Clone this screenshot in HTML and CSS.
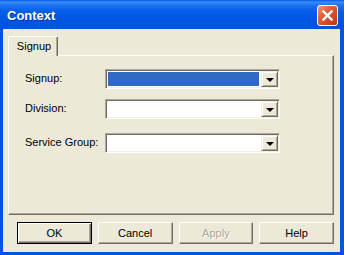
FILE: index.html
```html
<!DOCTYPE html>
<html lang="en">
  <head>
    <meta charset="UTF-8" />
    <title>Context</title>
    <link rel="stylesheet" href="styles.css">
  </head>
  <body>
    <div class="window">
      <div class="titlebar">
        <span class="title">Context</span>
        <button class="close" type="button">
          <svg width="19" height="19" viewBox="0 0 19 19">
            <path d="M5.5 5.5 L13.5 13.5 M13.5 5.5 L5.5 13.5" stroke="#fff" stroke-width="2.4" stroke-linecap="square" fill="none" />
          </svg>
        </button>
      </div>

      <div class="client">
        <div class="tabs">
          <div class="tab">Signup</div>
        </div>

        <div class="panel">
          <div class="row">
            <label class="label">Signup:</label>
            <div class="combo">
              <div class="field selected"></div>
              <span class="drop"><i class="arrow"></i></span>
            </div>
          </div>
          <div class="row">
            <label class="label">Division:</label>
            <div class="combo">
              <div class="field"></div>
              <span class="drop"><i class="arrow"></i></span>
            </div>
          </div>
          <div class="row row-spaced">
            <label class="label">Service Group:</label>
            <div class="combo">
              <div class="field"></div>
              <span class="drop"><i class="arrow"></i></span>
            </div>
          </div>
        </div>

        <div class="buttons">
          <button class="btn default" type="button">OK</button>
          <button class="btn" type="button">Cancel</button>
          <button class="btn disabled" type="button">Apply</button>
          <button class="btn" type="button">Help</button>
        </div>
      </div>
    </div>
  </body>
</html>
```

FILE: styles.css
```css
* {
  box-sizing: border-box;
  margin: 0;
  padding: 0;
}

body {
  width: 344px;
  height: 255px;
  overflow: hidden;
  font-family: "Liberation Sans", Arial, sans-serif;
  font-size: 11px;
  color: #000;
}

.window {
  width: 344px;
  height: 255px;
  display: flex;
  flex-direction: column;
}

/* Title bar */
.titlebar {
  height: 29px;
  display: flex;
  align-items: center;
  justify-content: space-between;
  padding: 2px 6px 0 7px;
  background: linear-gradient(to bottom, #0058e6 0%, #3d8cf5 7%, #1c72ef 18%, #065de8 40%, #0055e5 75%, #0050dc 100%);
}

.title {
  color: #fff;
  font-size: 13px;
  font-weight: bold;
  text-shadow: 1px 1px #0a2f9c;
}

.close {
  width: 21px;
  height: 21px;
  border: 1px solid #fff;
  border-radius: 3px;
  background: linear-gradient(135deg, #f1977a 0%, #e0633f 35%, #cf4724 70%, #bd3412 100%);
  display: flex;
  align-items: center;
  justify-content: center;
}

/* Client area */
.client {
  flex: 1;
  display: flex;
  flex-direction: column;
  background-color: #ece9d8;
  border-left: 3px solid #0055e5;
  border-right: 4px solid #0055e5;
  border-bottom: 3px solid #0052df;
  padding: 7px 6px 8px 5px;
}

.tabs {
  display: flex;
  height: 19px;
}

.tab {
  width: 50px;
  height: 20px;
  margin-bottom: -1px;
  position: relative;
  z-index: 1;
  background-color: #ece9d8;
  border-top: 1px solid #fff;
  border-left: 1px solid #fff;
  border-right: 1px solid #716f64;
  border-radius: 2px 2px 0 0;
  box-shadow: inset -1px 0 #aca899;
  text-align: center;
  line-height: 18px;
  padding-left: 2px;
}

.panel {
  height: 160px;
  border-top: 1px solid #fff;
  border-left: 1px solid #fff;
  border-right: 1px solid #716f64;
  border-bottom: 1px solid #716f64;
  box-shadow: inset -1px -1px #aca899;
  padding: 13px 0 0 16px;
  display: flex;
  flex-direction: column;
  gap: 10px;
}

.row {
  display: flex;
  align-items: center;
  height: 20px;
}

.row-spaced {
  margin-top: 4px;
}

.label {
  width: 80px;
  padding-bottom: 3px;
}

.combo {
  width: 175px;
  height: 20px;
  display: flex;
  background-color: #fff;
  border: 1px solid;
  border-color: #aca899 #fff #fff #aca899;
  box-shadow: inset 1px 1px #716f64, inset -1px -1px #f1efe2;
  padding: 1px 1px 1px 1px;
}

.field {
  flex: 1;
  margin: 1px 2px 1px 1px;
}

.field.selected {
  background-color: #316ac5;
}

.drop {
  width: 17px;
  height: 16px;
  display: flex;
  align-items: center;
  justify-content: center;
  background-color: #ece9d8;
  border: 1px solid;
  border-color: #f1efe2 #716f64 #716f64 #f1efe2;
  box-shadow: inset 1px 1px #fff, inset -1px -1px #aca899;
}

.arrow {
  width: 0;
  height: 0;
  border-left: 4px solid transparent;
  border-right: 4px solid transparent;
  border-top: 4px solid #000;
  margin-top: 1px;
}

/* Dialog buttons */
.buttons {
  display: flex;
  gap: 6px;
  margin-top: 7px;
  padding-left: 9px;
}

.btn {
  width: 75px;
  height: 22px;
  font-family: "Liberation Sans", Arial, sans-serif;
  font-size: 11px;
  color: #000;
  background-color: #ece9d8;
  border: 1px solid;
  border-color: #fff #716f64 #716f64 #fff;
  box-shadow: inset -1px -1px #aca899;
}

.btn.default {
  border: 1px solid #000;
  box-shadow: inset 1px 1px #fff, inset -1px -1px #716f64, inset -2px -2px #aca899;
}

.btn.disabled {
  color: #aca899;
  text-shadow: 1px 1px #fff;
}
```
